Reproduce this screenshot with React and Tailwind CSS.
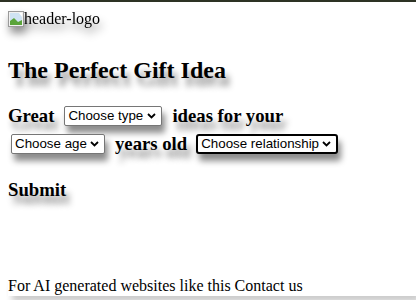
import React from 'react';

const Chevron = () => (
  <svg className="pointer-events-none absolute right-[5px] top-1/2 -translate-y-1/2" width="9" height="6" viewBox="0 0 9 6">
    <path d="M1 1 L4.5 4.5 L8 1" fill="none" stroke="#000" strokeWidth="1.8" />
  </svg>
);

const Picker = ({ label, width, focused }) => (
  <span className={`relative inline-flex h-[20px] items-center ${width} shadow-[3px_7px_6px_rgba(0,0,0,0.45)] ${focused ? 'rounded-[3px] border-2 border-black' : 'rounded-[2px] border border-[#767676]'} bg-white`}>
    <select className="h-full w-full appearance-none bg-transparent py-0 pl-[3px] pr-4 font-['Liberation_Sans',Arial,sans-serif] text-[13.33px] font-normal leading-[16px] text-black outline-none">
      <option>{label}</option>
    </select>
    <Chevron />
  </span>
);

const BrokenImage = () => (
  <svg width="16" height="16" viewBox="0 0 16 16" className="shrink-0">
    <rect x="0.5" y="0.5" width="15" height="15" fill="#f1f1f1" stroke="#9a9a9a" />
    <rect x="2" y="2" width="12" height="12" fill="#cfe3f3" />
    <path d="M2 14 L2 10 L6 7 L10 11 L14 9 L14 14 Z" fill="#5aa43a" />
    <path d="M11 2 L14 2 L14 6 Z" fill="#fff" />
  </svg>
);

const shadowText = '[text-shadow:4px_8px_6px_rgba(0,0,0,0.45)]';

export default function App() {
  return (
    <div className="min-h-[300px] border-t-2 border-[#2d3224] bg-white font-['Liberation_Serif','Times_New_Roman',serif] text-black">
      {/* Header */}
      <div className="flex items-center px-2 pt-[8px]">
        <div className="flex items-center drop-shadow-[2px_6px_4px_rgba(0,0,0,0.45)]">
          <BrokenImage />
          <span className="text-[16px] leading-[18px]">header-logo</span>
        </div>
      </div>

      {/* Title */}
      <h2 className={`mt-[28px] px-2 text-[24px] font-bold leading-[28px] ${shadowText}`}>
        The Perfect Gift Idea
      </h2>

      {/* Form */}
      <div className="mt-[18px] px-2 text-[18.72px] font-bold">
        <div className="flex h-[28px] items-center gap-[10px]">
          <span className={shadowText}>Great</span>
          <Picker label="Choose type" width="w-[98px]" />
          <span className={shadowText}>ideas for your</span>
        </div>
        <div className="flex h-[28px] items-center pl-[3px]">
          <Picker label="Choose age" width="w-[94px]" />
          <span className={`ml-[10px] ${shadowText}`}>years old</span>
          <span className="ml-[9px] flex">
            <Picker label="Choose relationship" width="w-[142px]" focused />
          </span>
        </div>
        <button className={`mt-[18px] h-[28px] cursor-pointer font-bold ${shadowText}`}>
          Submit
        </button>
      </div>

      {/* Footer */}
      <div className="mt-[72px] ml-2 text-[16px] leading-[20px] shadow-[4px_6px_6px_rgba(0,0,0,0.2)]">
        For AI generated websites like this Contact us
      </div>
    </div>
  );
}
